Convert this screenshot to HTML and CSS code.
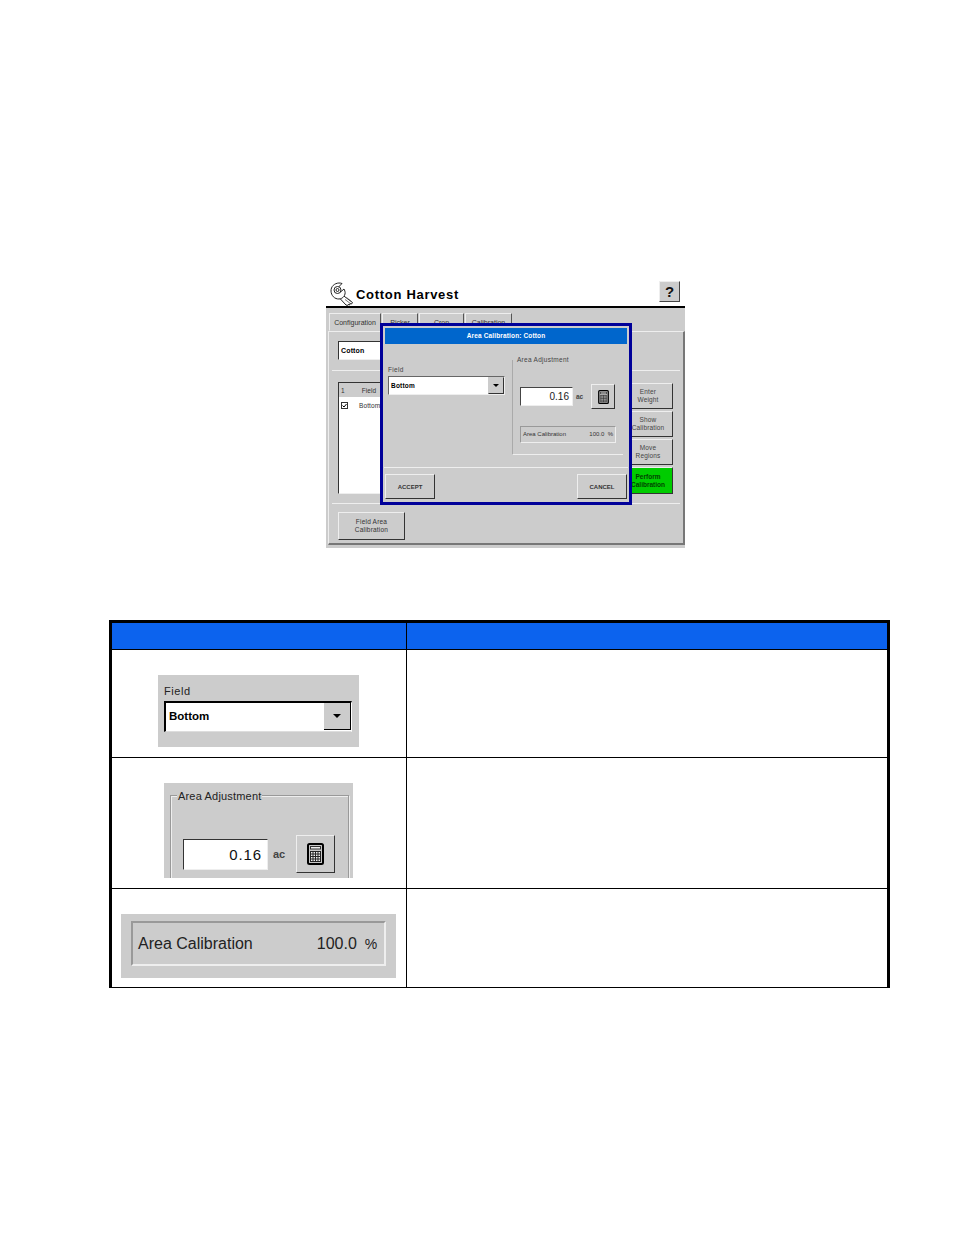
FILE: index.html
```html
<!DOCTYPE html>
<html lang="en">
<head>
<meta charset="utf-8">
<title>Cotton Harvest</title>
<link rel="stylesheet" href="styles.css">
</head>
<body>
<svg class="defs" width="0" height="0" aria-hidden="true">
  <symbol id="calc" viewBox="0 0 17 22">
    <rect x="1" y="1" width="15" height="20" rx="1.500" fill="#c8c8c8" stroke="#000" stroke-width="2"/>
    <rect x="3.500" y="3.500" width="10" height="2.500" fill="#eee" stroke="#333" stroke-width="1"/>
    <path d="M3.500 8.500h10v10h-10z" fill="#eee"/>
    <path d="M3.500 8.500h10M3.500 11h10M3.500 13.500h10M3.500 16h10M3.500 18.500h10M3.500 8v11M6 8v11M8.500 8v11M11 8v11M13.500 8v11" fill="none" stroke="#222" stroke-width="1"/>
  </symbol>
</svg>

<section class="figure">
  <header class="fig-title">
    <svg class="wrench" viewBox="0 0 24 24" aria-hidden="true">
      <g fill="#fff" stroke="#222" stroke-width="1" stroke-linejoin="round">
        <path d="M12.500 13l10 7.500-1 1.500-1.500-.500-.500 1.500-1.500-.500-.500 1-1.500-.500-6.500-7z"/>
        <path d="M12 1.500c-4-1.500-9 .5-10.500 4.500s.5 9 4.500 10.500 8-.5 9-4.500c.5-2-.5-4-1-5l-3.500 3-3.500-3.500z"/>
        <circle cx="7.500" cy="8" r="3.500"/>
        <circle cx="7.500" cy="8" r="1.500"/>
      </g>
      <path d="M15 17.500l6 4.500M16.500 15.500l5 4" stroke="#555" stroke-width=".8"/>
    </svg>
    <h1>Cotton Harvest</h1>
    <span class="help">?</span>
  </header>
  <nav class="tabs">
    <span class="tab active">Configuration</span>
    <span class="tab picker">Picker</span>
    <span class="tab crop">Crop</span>
    <span class="tab calib">Calibration</span>
  </nav>
  <div class="panel">
    <div class="row-top"><span class="crop-select">Cotton</span></div>
    <div class="row-mid">
      <div class="list">
        <div class="list-head"><span>1</span><span class="list-field">Field</span></div>
        <div class="list-row">
          <svg class="check" viewBox="0 0 7 7" aria-hidden="true"><rect x=".5" y=".5" width="6" height="6" fill="#fff" stroke="#333"/><path d="M1.500 3.500l1.500 1.500 2.500-3" fill="none" stroke="#000"/></svg>
          <span>Bottom</span>
        </div>
      </div>
      <div class="side">
        <span class="btn side-btn">Enter<br>Weight</span>
        <span class="btn side-btn">Show<br>Calibration</span>
        <span class="btn side-btn">Move<br>Regions</span>
        <span class="btn side-btn green">Perform<br>Calibration</span>
      </div>
    </div>
    <div class="row-bot"><span class="btn field-btn">Field Area<br>Calibration</span></div>
  </div>

  <div class="dialog">
    <div class="dlg-title">Area Calibration: Cotton</div>
    <div class="dlg-body">
      <div class="dlg-left">
        <div class="dlg-label">Field</div>
        <div class="dlg-select"><span>Bottom</span><i class="drop"><b class="arrow"></b></i></div>
      </div>
      <div class="dlg-group">
        <div class="dlg-legend">Area Adjustment</div>
        <div class="dlg-input-row">
          <span class="dlg-input">0.16</span>
          <span class="dlg-unit">ac</span>
          <span class="btn dlg-calc"><svg class="calc-sm"><use href="#calc"/></svg></span>
        </div>
        <div class="dlg-readout"><span>Area Calibration</span><span class="dlg-val">100.0 &nbsp;%</span></div>
      </div>
    </div>
    <div class="dlg-foot">
      <span class="btn dlg-btn">ACCEPT</span>
      <span class="btn dlg-btn">CANCEL</span>
    </div>
  </div>
</section>

<table class="info">
  <colgroup><col class="c1"><col></colgroup>
  <thead><tr><th></th><th></th></tr></thead>
  <tbody>
    <tr class="r1">
      <td>
        <div class="shot shot-field">
          <div class="f-label">Field</div>
          <div class="f-select"><span>Bottom</span><i class="f-drop"><b class="arrow"></b></i></div>
        </div>
      </td>
      <td></td>
    </tr>
    <tr class="r2">
      <td>
        <div class="shot shot-area">
          <div class="a-group">
            <div class="a-legend">Area Adjustment</div>
            <div class="a-row">
              <span class="a-input">0.16</span>
              <span class="a-unit">ac</span>
              <span class="btn a-calc"><svg class="calc-lg"><use href="#calc"/></svg></span>
            </div>
          </div>
        </div>
      </td>
      <td></td>
    </tr>
    <tr class="r3">
      <td>
        <div class="shot shot-cal">
          <div class="c-box"><span>Area Calibration</span><span class="c-val">100.0</span><span class="c-pct">%</span></div>
        </div>
      </td>
      <td></td>
    </tr>
  </tbody>
</table>
</body>
</html>
```
FILE: styles.css
```css
* { box-sizing: border-box; }
html, body { margin: 0; padding: 0; background: #fff; }
body { font-family: "Liberation Sans", Arial, sans-serif; color: #000; height: 1235px; overflow: hidden; padding-top: 281px; }
.defs { position: absolute; }

.figure { position: relative; width: 359px; height: 267px; margin-left: 326px; background: linear-gradient(#fff 26px, #000 26px, #000 27px, #ccc 27px); }
.fig-title { height: 27px; display: flex; align-items: center; padding-left: 4px; border-bottom: 2px solid #000; }
.wrench { width: 24px; height: 24px; flex: none; margin-top: 1px; }
.fig-title h1 { margin: 2px 0 0 2px; font-size: 13px; line-height: 16px; font-weight: 700; letter-spacing: .7px; flex: 1; }
.help { width: 21px; height: 21px; margin: -4px 5px 0 0; background: #ccc; border: 1px solid; border-color: #eee #444 #444 #eee; font-weight: 700; font-size: 15px; line-height: 19px; text-align: center; color: #111; }

.tabs { height: 23px; padding: 5px 0 0 3px; display: flex; gap: 1px; font-size: 7px; color: #333; }
.tab { height: 18px; border: 1px solid; border-color: #eee #555 #ccc #eee; text-align: center; line-height: 16px; padding-top: 1px; }
.tab.active { width: 52px; }
.picker { width: 36px; }
.crop { width: 45px; }
.calib { width: 47px; }

.panel { width: 357px; height: 214px; margin-left: 2px; border: 1px solid; border-color: #eee #777 #777 #eee; border-right-width: 2px; border-bottom-width: 2px; display: flex; flex-direction: column; }
.row-top { height: 39px; padding: 9px 0 0 6px; border-bottom: 1px solid #eee; margin: 0 3px; }
.crop-select { display: block; width: 60px; height: 19px; background: #fff; border: 1px solid; border-color: #333 #eee #eee #333; font-size: 7px; font-weight: 700; line-height: 17px; padding-left: 2px; letter-spacing: .15px; }
.row-mid { height: 133px; padding: 11px 7px 0 6px; margin: 0 3px; border-bottom: 1px solid #eee; display: flex; justify-content: space-between; }
.list { width: 60px; height: 112px; background: #fff; border: 1px solid; border-color: #333 #eee #eee #333; font-size: 6.500px; color: #333; letter-spacing: .1px; }
.list-head { height: 14px; background: #ccc; display: flex; padding: 4px 0 0 2px; line-height: 8px; }
.list-field { margin-left: 17px; }
.list-row { display: flex; padding: 4px 0 0 2px; line-height: 9px; gap: 11px; }
.check { width: 7px; height: 7px; margin-top: 1px; flex: none; }
.side { width: 60px; padding-top: 1px; display: flex; flex-direction: column; gap: 2px; }
.btn { display: flex; align-items: center; justify-content: center; text-align: center; background: #ccc; border: 1px solid; border-color: #eee #333 #333 #eee; }
.side-btn { height: 26px; font-size: 6.500px; line-height: 8px; color: #444; padding-left: 10px; letter-spacing: .15px; }
.side-btn.green { height: 27px; background: #00cc00; font-weight: 700; color: #040; letter-spacing: 0; }
.row-bot { padding: 8px 0 0 9px; }
.field-btn { width: 67px; height: 28px; font-size: 6.500px; line-height: 8.500px; color: #333; letter-spacing: .2px; }

.dialog { position: absolute; left: 54px; top: 42px; width: 252px; height: 182px; background: #ccc; border: 3px solid #000099; padding-top: 2px; display: flex; flex-direction: column; }
.dlg-title { height: 16px; margin: 0 2px; background: #0066cc; color: #fff; font-size: 6.500px; font-weight: 700; text-align: center; line-height: 16px; letter-spacing: .15px; }
.dlg-body { height: 124px; display: flex; border-bottom: 1px solid #eee; margin: 0 1px; }
.dlg-left { width: 128px; padding: 21px 0 0 4px; }
.dlg-label { font-size: 6.500px; line-height: 9px; color: #444; letter-spacing: .3px; }
.dlg-select { width: 117px; height: 19px; margin-top: 2px; background: #fff; border: 1px solid; border-color: #666 #eee #eee #666; display: flex; justify-content: space-between; font-size: 6.500px; font-weight: 700; line-height: 17px; padding-left: 2px; letter-spacing: .2px; }
.drop { width: 16px; background: #ccc; border: 1px solid; border-color: #ccc #333 #333 #ccc; display: flex; align-items: center; justify-content: center; }
.arrow { width: 0; height: 0; border: 3px solid transparent; border-top-color: #000; border-bottom: 0; }
.dlg-group { width: 111px; height: 95px; margin-top: 16px; border-left: 1px solid #aaa; border-bottom: 1px solid #eee; }
.dlg-legend { font-size: 6.500px; line-height: 8px; margin: -4px 0 0 4px; color: #444; letter-spacing: .28px; }
.dlg-input-row { display: flex; align-items: center; margin: 20px 0 0 7px; height: 25px; }
.dlg-input { width: 53px; height: 19px; background: #fff; border: 1px solid; border-color: #444 #eee #eee #444; font-size: 10px; line-height: 17px; text-align: right; padding-right: 3px; color: #222; }
.dlg-unit { width: 18px; font-size: 6.500px; font-weight: 700; color: #444; padding-left: 3px; }
.btn.dlg-calc { width: 24px; height: 25px; }
.calc-sm { width: 11px; height: 14px; }
.dlg-readout { width: 96px; height: 17px; margin: 17px 0 0 7px; border: 1px solid; border-color: #999 #eee #eee #999; display: flex; justify-content: space-between; padding: 0 2px; font-size: 6px; line-height: 15px; color: #333; }
.dlg-val { white-space: nowrap; }
.dlg-foot { height: 33px; padding: 6px 2px 0; display: flex; justify-content: space-between; }
.dlg-btn { width: 50px; height: 25px; font-size: 6px; font-weight: 700; color: #333; }

.info { width: 781px; margin: 72px 0 0 109px; table-layout: fixed; border-collapse: separate; border-spacing: 0; border-top: 3px solid #000; border-left: 3px solid #000; border-right: 3px solid #000; }
.c1 { width: 295px; }
.info th { height: 27px; padding: 0; background: #0c63ee; border-bottom: 1px solid #000; }
.info th:first-child, .info td:first-child { border-right: 1px solid #000; }
.info td { padding: 25px 0 0; vertical-align: top; border-bottom: 1px solid #000; }
.info td:first-child { padding-right: 1px; }
.r1 td { height: 108px; }
.r2 td { height: 131px; }
.r3 td { height: 99px; }
.shot { background: #ccc; margin: 0 auto; }

.shot-field { width: 201px; height: 72px; padding: 10px 0 0 6px; }
.f-label { font-size: 11px; line-height: 13px; color: #222; letter-spacing: .55px; }
.f-select { width: 188px; height: 31px; margin-top: 3px; background: #fff; border: 1px solid; border-width: 2px 1px 1px 2px; border-color: #000 #fff #ddd #000; display: flex; justify-content: space-between; font-size: 11.500px; font-weight: 700; line-height: 27px; padding-left: 3px; }
.f-drop { width: 27px; height: 27px; background: #ccc; border-right: 1px solid #000; border-bottom: 1px solid #000; display: flex; align-items: center; justify-content: center; }
.f-drop .arrow { border-width: 4px; border-bottom: 0; }

.shot-area { width: 189px; height: 95px; padding: 12px 4px 0 6px; overflow: hidden; }
.a-group { height: 100px; border: 1px solid; border-color: #999 #999 transparent #999; box-shadow: inset 1px 1px 0 #eee, 1px 1px 0 #eee; }
.a-legend { display: table; background: #ccc; margin: -6px 0 0 6px; padding: 0 1px; font-size: 11px; line-height: 13px; color: #222; letter-spacing: .18px; }
.a-row { display: flex; align-items: center; height: 38px; margin: 32px 0 0 12px; }
.a-input { width: 85px; height: 31px; background: #fff; border: 1px solid; border-color: #333 #eee #eee #333; font-size: 15px; line-height: 29px; text-align: right; padding-right: 5px; letter-spacing: .9px; color: #111; }
.a-unit { width: 28px; font-size: 11px; font-weight: 700; color: #444; padding-left: 5px; }
.btn.a-calc { width: 39px; height: 38px; }
.calc-lg { width: 17px; height: 22px; }

.shot-cal { width: 275px; height: 64px; padding: 7px 10px 0; }
.c-box { height: 45px; display: flex; align-items: center; border: 2px solid; border-color: #999 #eee #eee #999; padding: 0 0 0 5px; font-size: 16px; color: #222; }
.c-val { margin-left: 64px; }
.c-pct { margin-left: 8px; font-size: 14px; }
```
